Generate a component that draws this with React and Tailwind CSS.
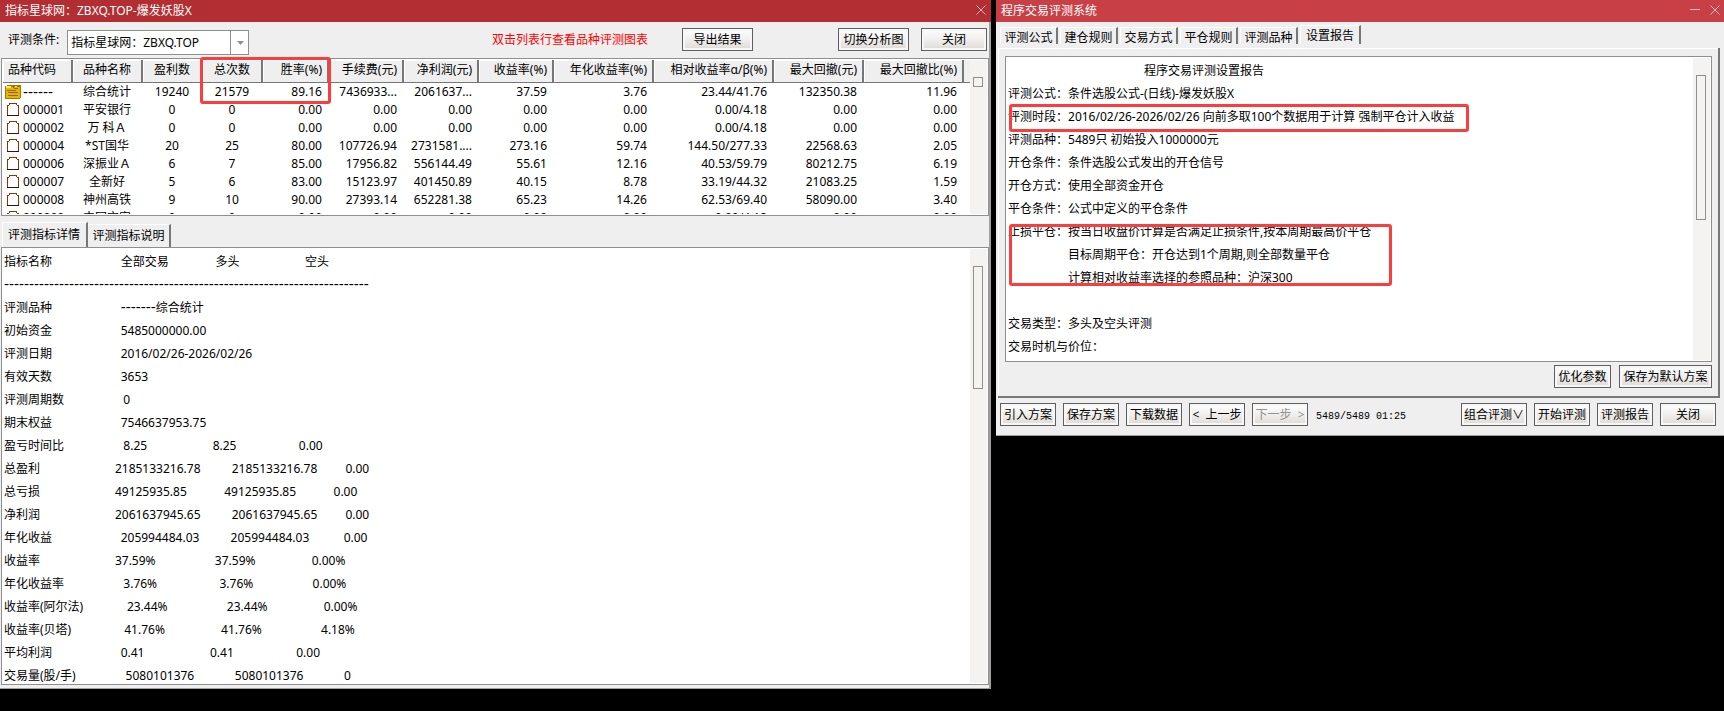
import React from "react";

const columns = [
  { title: "品种代码", width: "w-[69px]", align: "text-left" },
  { title: "品种名称", width: "w-[70px]", align: "text-center" },
  { title: "盈利数", width: "w-[60px]", align: "text-center" },
  { title: "总次数", width: "w-[60px]", align: "text-center" },
  { title: "胜率(%)", width: "w-[66px]", align: "text-right" },
  { title: "手续费(元)", width: "w-[75px]", align: "text-right" },
  { title: "净利润(元)", width: "w-[75px]", align: "text-right" },
  { title: "收益率(%)", width: "w-[75px]", align: "text-right" },
  { title: "年化收益率(%)", width: "w-[100px]", align: "text-right" },
  { title: "相对收益率α/β(%)", width: "w-[120px]", align: "text-right" },
  { title: "最大回撤(元)", width: "w-[90px]", align: "text-right" },
  { title: "最大回撤比(%)", width: "w-[100px]", align: "text-right" },
];

const stocks = [
  ["------", "综合统计", "19240", "21579", "89.16", "7436933...", "2061637...", "37.59", "3.76", "23.44/41.76", "132350.38", "11.96"],
  ["000001", "平安银行", "0", "0", "0.00", "0.00", "0.00", "0.00", "0.00", "0.00/4.18", "0.00", "0.00"],
  ["000002", "万 科Ａ", "0", "0", "0.00", "0.00", "0.00", "0.00", "0.00", "0.00/4.18", "0.00", "0.00"],
  ["000004", "*ST国华", "20", "25", "80.00", "107726.94", "2731581....", "273.16", "59.74", "144.50/277.33", "22568.63", "2.05"],
  ["000006", "深振业Ａ", "6", "7", "85.00", "17956.82", "556144.49", "55.61", "12.16", "40.53/59.79", "80212.75", "6.19"],
  ["000007", "全新好", "5", "6", "83.00", "15123.97", "401450.89", "40.15", "8.78", "33.19/44.32", "21083.25", "1.59"],
  ["000008", "神州高铁", "9", "10", "90.00", "27393.14", "652281.38", "65.23", "14.26", "62.53/69.40", "58090.00", "3.40"],
  ["000009", "中国宝安", "0", "0", "0.00", "0.00", "0.00", "0.00", "0.00", "0.00/4.18", "0.00", "0.00"],
];

// label, then pairs of (spaces before, value)
const details = [
  ["指标名称", 22, "全部交易", 15, "多头", 21, "空头"],
  ["-".repeat(73)],
  ["评测品种", 22, "-------", 0, "综合统计"],
  ["初始资金", 22, "5485000000.00"],
  ["评测日期", 22, "2016/02/26-2026/02/26"],
  ["有效天数", 22, "3653"],
  ["评测周期数", 19, "0"],
  ["期末权益", 22, "7546637953.75"],
  ["盈亏时间比", 19, "8.25", 21, "8.25", 20, "0.00"],
  ["总盈利", 24, "2185133216.78", 10, "2185133216.78", 9, "0.00"],
  ["总亏损", 24, "49125935.85", 12, "49125935.85", 12, "0.00"],
  ["净利润", 24, "2061637945.65", 10, "2061637945.65", 9, "0.00"],
  ["年化收益", 22, "205994484.03", 10, "205994484.03", 11, "0.00"],
  ["收益率", 24, "37.59%", 19, "37.59%", 18, "0.00%"],
  ["年化收益率", 19, "3.76%", 20, "3.76%", 19, "0.00%"],
  ["收益率(阿尔法)", 14, "23.44%", 19, "23.44%", 18, "0.00%"],
  ["收益率(贝塔)", 17, "41.76%", 18, "41.76%", 19, "4.18%"],
  ["平均利润", 22, "0.41", 21, "0.41", 20, "0.00"],
  ["交易量(股/手)", 16, "5080101376", 13, "5080101376", 13, "0"],
];

const report = [
  ["评测公式：", "条件选股公式-(日线)-爆发妖股X"],
  ["评测时段：", "2016/02/26-2026/02/26 向前多取100个数据用于计算 强制平仓计入收益"],
  ["评测品种：", "5489只 初始投入1000000元"],
  ["开仓条件：", "条件选股公式发出的开仓信号"],
  ["开仓方式：", "使用全部资金开仓"],
  ["平仓条件：", "公式中定义的平仓条件"],
  ["止损平仓：", "按当日收盘价计算是否满足止损条件,按本周期最高价平仓"],
  ["", "目标周期平仓：开仓达到1个周期,则全部数量平仓"],
  ["", "计算相对收益率选择的参照品种：沪深300"],
  ["", ""],
  ["交易类型：", "多头及空头评测"],
  ["交易时机与价位：", ""],
];

function Button({ width = "w-14", disabled, children }) {
  return (
    <button
      type="button"
      disabled={disabled}
      className={`${width} h-[23px] shrink-0 whitespace-pre border border-[#5f5f5f] bg-gradient-to-b from-white via-[#f0efee] to-[#dedad5] text-center leading-[19px] text-black shadow-[inset_0_0_0_2px_#f7f7f7] disabled:text-[#929292]`}
    >
      {children}
    </button>
  );
}

function CloseIcon() {
  return (
    <svg width="10" height="10" viewBox="0 0 10 10" fill="none" stroke="currentColor" aria-hidden="true">
      <path d="M.5.5l9 9M9.5.5l-9 9" />
    </svg>
  );
}

function MinimizeIcon() {
  return (
    <svg width="10" height="10" viewBox="0 0 10 10" fill="none" stroke="currentColor" aria-hidden="true">
      <path d="M0 4.5h10" />
    </svg>
  );
}

function Scrollbar({ thumb }) {
  return (
    <div className="w-[17px] shrink-0 bg-[#f4f3f2] px-[3px] pt-[17px]">
      <div className={`${thumb} w-[10px] border border-[#8f8f8f]`} />
    </div>
  );
}

// hyphens are drawn wider than in the body font
function Text({ value }) {
  if (value.startsWith("---")) {
    return <span className="font-['Liberation_Sans'] text-[15px] leading-none">{value}</span>;
  }
  return value;
}

function SummaryIcon() {
  return (
    <svg width="16" height="14" viewBox="0 0 16 14" shapeRendering="crispEdges" className="shrink-0" aria-hidden="true">
      <path d="M0 1h2V0h14v13h-1v1H0z" fill="#a87400" />
      <path d="M1 2h14v11H1z" fill="#e8b400" />
      <path d="M1 1h5v2H1zM10 1h2v1h-2z" fill="#ffe070" />
      <path d="M8 1h1v2H8zM12 1h1v1h-1zM9 3h4v1H9zM2 5h9v1H2zM3 7h10v1H3zM3 10h10v1H3z" fill="#946200" />
    </svg>
  );
}

function StockIcon() {
  return (
    <svg width="16" height="14" viewBox="0 0 16 14" shapeRendering="crispEdges" className="shrink-0" aria-hidden="true">
      <path d="M2 2h12v11H2zM4 1h8v1H4z" fill="#fff" />
      <path d="M4 0h8v1H4zM4 1h1v1H4zM11 1h1v1h-1zM2 2h2v1H2zM12 2h2v1h-2zM2 3h1v9H2zM13 3h1v9h-1z" fill="#8f3208" />
      <path d="M2 12h12v1H2z" fill="#3a1408" />
    </svg>
  );
}

function StockTable() {
  return (
    <table className="w-full table-fixed border-collapse whitespace-nowrap">
      <thead>
        <tr className="h-[22px] bg-[#efefef]">
          {columns.map((col) => (
            <th
              key={col.title}
              className={`${col.width} ${col.align} overflow-hidden border-r-2 border-b border-[#777] px-[5px] pt-0 pb-0.5 font-normal leading-[18px] shadow-[inset_1px_1px_0_#fff]`}
            >
              {col.title}
            </th>
          ))}
          <th className="border-b border-[#777]" />
        </tr>
      </thead>
      <tbody>
        {stocks.map((row, i) => (
          <tr key={row[0]} className="h-[18px]">
            {row.map((cell, j) => (
              <td key={j} className={`${columns[j].align} p-0 leading-[18px] ${j > 3 ? "pr-[6px]" : ""}`}>
                {j === 0 ? (
                  <span className="flex items-center gap-[2px] pl-[2px]">
                    {i === 0 ? <SummaryIcon /> : <StockIcon />}
                    <Text value={cell} />
                  </span>
                ) : (
                  cell
                )}
              </td>
            ))}
            <td />
          </tr>
        ))}
      </tbody>
    </table>
  );
}

function ResultWindow() {
  return (
    <main className="min-w-0 border-r-2 border-b border-[#a0a0a0] bg-[#efefef]">
      <header className="-mr-[2px] flex h-[22px] items-center justify-between bg-[#b22e32] px-[5px] text-white">
        <h1>指标星球网：ZBXQ.TOP-爆发妖股X</h1>
        <button type="button" aria-label="关闭窗口" className="pb-0.5 text-[#e5b5b7]">
          <CloseIcon />
        </button>
      </header>
      <div className="flex h-9 items-center pr-[2px] pb-px pl-2">
        <label htmlFor="plan">评测条件:</label>
        <div className="relative mt-[6px] ml-2">
          <select id="plan" className="block h-[25px] w-[182px] appearance-none border border-[#8f8f8f] bg-white pl-[3px]">
            <option>指标星球网：ZBXQ.TOP</option>
          </select>
          <span className="pointer-events-none absolute inset-y-0 right-0 flex w-[19px] items-center justify-center border-l border-[#8f8f8f]">
            <svg width="7" height="4" viewBox="0 0 7 4" aria-hidden="true">
              <path d="M0 0h7L3.5 4z" fill="#8f8f8f" />
            </svg>
          </span>
        </div>
        <p className="mr-[34px] ml-auto text-[#f00]">双击列表行查看品种评测图表</p>
        <Button width="w-[71px]">导出结果</Button>
        <div className="w-[85px]" />
        <Button width="w-[71px]">切换分析图</Button>
        <div className="w-3" />
        <Button width="w-[66px]">关闭</Button>
      </div>
      <section className="relative ml-px border border-[#8f8f8f] bg-white p-px">
        <div className="flex h-[154px] overflow-hidden">
          <div className="min-w-0 flex-1 overflow-hidden">
            <StockTable />
          </div>
          <Scrollbar thumb="h-[10px]" />
        </div>
        <div className="absolute -top-[2px] left-[198px] h-[47px] w-[131px] rounded-[3px] border-[3px] border-[#fc3d3d]" />
      </section>
      <nav className="ml-[2px] flex h-[31px] items-end">
        <button type="button" className="h-[25px] w-[86px] border-t border-r-2 border-t-white border-r-[#777] shadow-[inset_1px_0_0_#fff]">评测指标详情</button>
        <button type="button" className="h-[23px] w-[83px] border-t border-r-2 border-t-white border-r-[#777]">评测指标说明</button>
      </nav>
      <section className="mb-[3px] ml-px flex h-[438px] overflow-hidden border border-[#8f8f8f] bg-white p-px">
        <div className="min-w-0 flex-1 pt-px pl-px">
          {details.map((row) => (
            <p key={row[0]} className="h-[23px] whitespace-pre leading-[23px]">
              {row.map((part, i) =>
                typeof part === "number" ? " ".repeat(part) : <Text key={i} value={part} />
              )}
            </p>
          ))}
        </div>
        <Scrollbar thumb="h-[123px]" />
      </section>
    </main>
  );
}

function SetupWindow() {
  const tabs = ["评测公式", "建仓规则", "交易方式", "平仓规则", "评测品种"];
  return (
    <aside className="min-w-0 self-start border-b border-[#a0a0a0] bg-[#efefef]">
      <header className="flex h-[22px] items-center justify-between bg-[#c84045] pr-1 pl-[5px] text-white">
        <h2>程序交易评测系统</h2>
        <div className="flex gap-[10px] pb-0.5 text-[#ecc0c2]">
          <button type="button" aria-label="最小化"><MinimizeIcon /></button>
          <button type="button" aria-label="关闭窗口"><CloseIcon /></button>
        </div>
      </header>
      <nav className="flex h-[22px] items-end gap-[2px] pl-1">
        {tabs.map((tab) => (
          <button
            key={tab}
            type="button"
            className="h-[17px] w-[58px] border-t border-r-2 border-l border-t-white border-r-[#777] border-l-white leading-5"
          >
            {tab}
          </button>
        ))}
        <button type="button" className="h-[19px] w-[61px] border-t border-r-2 border-l border-t-white border-r-[#777] border-l-white leading-5">
          设置报告
        </button>
      </nav>
      <div className="mt-1 mr-1 ml-[2px] border-r-2 border-b-2 border-[#777] pt-2 pr-[6px] pb-2 pl-[7px] shadow-[inset_1px_1px_0_#fff]">
        <section className="relative flex h-[306px] border border-[#8f8f8f] bg-white p-px">
          <div className="min-w-0 flex-1 overflow-hidden whitespace-nowrap pt-px pl-px leading-[23px]">
            <h3 className="pl-[136px]">程序交易评测设置报告</h3>
            {report.map(([label, text], i) => (
              <p key={i} className="flex h-[23px]">
                <span className="min-w-[60px]">{label}</span>
                <span>{text}</span>
              </p>
            ))}
          </div>
          <Scrollbar thumb="h-[145px]" />
          <div className="absolute top-[47px] left-[3px] h-7 w-[460px] rounded-[3px] border-[3px] border-[#fc3d3d]" />
          <div className="absolute top-[167px] left-[3px] h-[62px] w-[383px] rounded-[3px] border-[3px] border-[#fc3d3d]" />
        </section>
        <div className="mt-[3px] flex justify-end gap-2">
          <Button width="w-[57px]">优化参数</Button>
          <Button width="w-[93px]">保存为默认方案</Button>
        </div>
      </div>
      <footer className="flex items-center gap-[7px] pt-[5px] pr-2 pb-[9px] pl-1">
        <Button>引入方案</Button>
        <Button>保存方案</Button>
        <Button>下载数据</Button>
        <Button>{"<  上一步"}</Button>
        <Button disabled>{"下一步  >"}</Button>
        <p className="mr-auto ml-px pt-1 font-['Liberation_Mono'] text-[10px]">5489/5489 01:25</p>
        <Button width="w-[66px]">组合评测∨</Button>
        <Button>开始评测</Button>
        <Button>评测报告</Button>
        <Button>关闭</Button>
      </footer>
    </aside>
  );
}

export default function App() {
  return (
    <div className="min-h-screen bg-black font-['Noto_Sans','Noto_Sans_CJK_SC',sans-serif] text-xs leading-4 text-black">
      <div className="grid grid-cols-[991fr_728fr] items-start gap-[5px]">
        <ResultWindow />
        <SetupWindow />
      </div>
    </div>
  );
}
